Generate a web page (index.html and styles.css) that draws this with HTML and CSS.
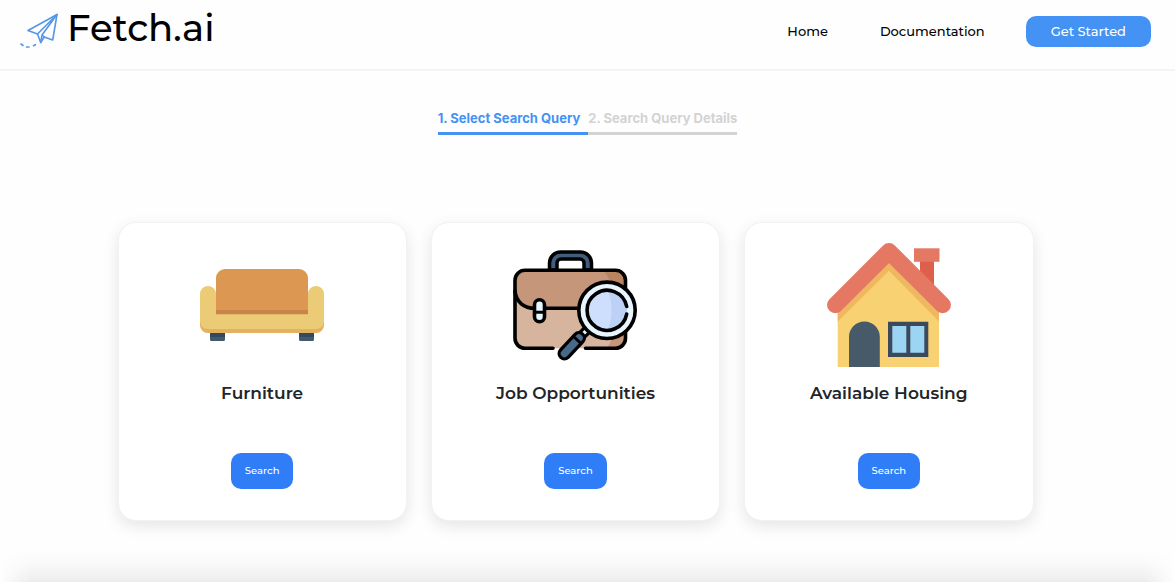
FILE: index.html
```html
<!DOCTYPE html>
<html lang="en">
<head>
    <meta charset="UTF-8">
    <meta name="viewport" content="width=device-width, initial-scale=1.0">
    <title>Fetch.ai</title>
    <link rel="stylesheet" href="styles.css">
</head>
<body>
    <header class="navbar">
        <a class="logo" href="#">
            <svg class="logo-icon" viewBox="0 0 39 36" fill="none" stroke="#5596e6" stroke-width="1.6" stroke-linejoin="round" stroke-linecap="round" aria-hidden="true">
                <path d="M37 1.5 8 17.5l9.500 3.500 3.200 8.500 3.500-5.500 8.500 3z"/>
                <path d="M37 1.500 17.500 21M37 1.500 22 22l-1.300 7.500M37 1.500 22 22l2.500 2"/>
                <path d="M1 31l2 1.500M6.500 34h2.500M13.500 32.700l2-1"/>
            </svg>
            <span>Fetch.ai</span>
        </a>
        <nav class="nav-links">
            <a href="#">Home</a>
            <a href="#">Documentation</a>
            <button class="get-started" type="button">Get Started</button>
        </nav>
    </header>

    <main>
        <ol class="steps">
            <li class="step active">1. Select Search Query</li>
            <li class="step">2. Search Query Details</li>
        </ol>

        <section class="cards">
            <article class="card">
                <svg class="card-icon" viewBox="0 0 124 124" aria-hidden="true">
                    <path fill="#334a5e" d="M10 88h15v8a2 2 0 0 1-2 2H12a2 2 0 0 1-2-2zM99 88h15v8a2 2 0 0 1-2 2h-11a2 2 0 0 1-2-2z"/>
                    <path fill="#415a70" d="M10 94h15v2a2 2 0 0 1-2 2H12a2 2 0 0 1-2-2zM99 94h15v2a2 2 0 0 1-2 2h-11a2 2 0 0 1-2-2z"/>
                    <path fill="#e3b160" d="M0 76h124v6a8 8 0 0 1-8 8H8a8 8 0 0 1-8-8z"/>
                    <path fill="#ebcb75" d="M0 51a8 8 0 0 1 16 0v14h92V51a8 8 0 0 1 16 0v27a8 8 0 0 1-8 8H8a8 8 0 0 1-8-8z"/>
                    <path fill="#dc9852" d="M16 35a9 9 0 0 1 9-9h74a9 9 0 0 1 9 9v36H16z"/>
                    <path fill="#ca8348" d="M16 67h92v4.300H16z"/>
                </svg>
                <h2>Furniture</h2>
                <button class="search" type="button">Search</button>
            </article>

            <article class="card">
                <svg class="card-icon" viewBox="0 0 124 124" stroke-linecap="round" stroke-linejoin="round" aria-hidden="true">
                    <!-- handle -->
                    <path d="M36.500 27V20a11 11 0 0 1 11-11h20a11 11 0 0 1 11 11v7H71v-7a4 4 0 0 0-4-4H48a4 4 0 0 0-4 4v7z" fill="#3f5d7d" stroke="#000" stroke-width="3.500"/>
                    <!-- case -->
                    <rect x="2" y="27.300" width="110.500" height="78" rx="10" fill="#d6b49e"/>
                    <path d="M94 105.300c8-12 10-30 8-45h10.500v35a10 10 0 0 1-10 10z" fill="#c59679"/>
                    <path d="M2 50V37a10 10 0 0 1 10-10h90a10 10 0 0 1 10 10v28H20C10 65 2 58 2 50z" fill="#c59679"/>
                    <path d="M90 27h12a10 10 0 0 1 10.500 10v28H99c3-14 0-28-9-38z" fill="#b98460"/>
                    <path d="M40 105.300H12a10 10 0 0 1-10-10V37.300a10 10 0 0 1 10-10h90.500a10 10 0 0 1 10 10v58a10 10 0 0 1-10 10H72.500" fill="none" stroke="#000" stroke-width="3.600"/>
                    <path d="M2 48c1 11 9 17.300 20 17.300h44" fill="none" stroke="#000" stroke-width="3.600"/>
                    <rect x="21.500" y="56.700" width="10" height="22" rx="5" fill="#e9f5fe" stroke="#000" stroke-width="3.600"/>
                    <path d="M22 69.300h9" stroke="#000" stroke-width="3"/>
                    <!-- magnifier -->
                    <path d="M76 85l-8 8" stroke="#000" stroke-width="10"/>
                    <path d="M75 86l-6 6" stroke="#e9f5fe" stroke-width="3.500"/>
                    <path d="M66 95l-14.500 15.500" stroke="#000" stroke-width="14"/>
                    <path d="M66 95l-14.500 15.500" stroke="#47698a" stroke-width="7.500"/>
                    <path d="M60.500 93.500l7.500 7" stroke="#000" stroke-width="3"/>
                    <circle cx="94" cy="67.300" r="28.200" fill="#e9f5fe" stroke="#000" stroke-width="3.600"/>
                    <circle cx="94" cy="67.300" r="20" fill="#bdd1f6"/>
                    <path d="M94 47.300a20 20 0 0 0 0 40c6-8 6-32 0-40z" fill="#cddffd"/>
                    <path d="M113.700 63.500a20 20 0 1 0 0 7.600" fill="none" stroke="#000" stroke-width="3.600"/>
                </svg>
                <h2>Job Opportunities</h2>
                <button class="search" type="button">Search</button>
            </article>

            <article class="card">
                <svg class="card-icon" viewBox="0 0 124 124" aria-hidden="true">
                    <path fill="#de604c" d="M93 16h14v28L93 30z"/>
                    <path fill="#e47863" d="M87 5.300h25.500v13.500H87z"/>
                    <path fill="#f7d172" d="M10.700 62 62 12l50 50v62H10.700z"/>
                    <path fill="#efb760" d="M10.700 62 62 12l50 50v16.500L62 27.700 10.700 78.500z"/>
                    <path fill="none" stroke="#e47863" stroke-width="16.500" stroke-linecap="round" stroke-linejoin="round" d="M8.300 62 62 8.300 115.700 62"/>
                    <path fill="#475a69" d="M22 124V94a15.400 15.400 0 0 1 30.800 0v30z"/>
                    <path fill="#3b495b" d="M61 78.700h40.300V114H61z"/>
                    <path fill="#9cd5f3" d="M65.300 83h14v26.700h-14zM83.300 83h14v26.700h-14z"/>
                </svg>
                <h2>Available Housing</h2>
                <button class="search" type="button">Search</button>
            </article>
        </section>
    </main>

    <footer class="footer"></footer>
</body>
</html>
```
FILE: styles.css
```css
* {
    box-sizing: border-box;
}

body {
    display: flex;
    flex-direction: column;
    min-height: 100vh;
    margin: 0;
    font-family: 'Montserrat', 'Inter', sans-serif;
    background-color: #fefefe;
    color: #212529;
}

a {
    color: #000;
    text-decoration: none;
}

button {
    border: none;
    border-radius: 10px;
    color: white;
    font-family: inherit;
    font-weight: 500;
    cursor: pointer;
}

.navbar {
    display: flex;
    justify-content: space-between;
    align-items: flex-start;
    padding: 0 24px 17px 20px;
    border-bottom: 2px solid #f4f4f4;
}

.logo {
    display: flex;
    align-items: center;
    gap: 8px;
    padding-top: 4px;
    font-size: 37px;
    font-weight: 500;
    line-height: 48px;
}

.logo-icon {
    width: 39px;
    height: 36px;
    margin-top: 5px;
}

.nav-links {
    display: flex;
    align-items: center;
    padding-top: 16px;
    font-size: 13px;
    font-weight: 500;
}

.nav-links a {
    margin-right: 52px;
    padding-bottom: 2px;
}

.nav-links a + a {
    margin-right: 41px;
}

.get-started {
    height: 31px;
    padding: 0 25px 2px;
    background-color: #4492f4;
    font-size: 13px;
}

.get-started:hover,
.search:hover {
    opacity: 0.9;
}

.steps {
    display: flex;
    justify-content: center;
    margin: 38px 0 0;
    padding: 0;
    list-style: none;
    font-family: 'Inter', sans-serif;
    font-size: 13px;
    font-weight: 700;
    line-height: 18px;
}

.step {
    padding-bottom: 5px;
    border-bottom: 3px solid #d3d3d3;
    color: #d3d3d3;
}

.step.active {
    padding-right: 8px;
    border-color: #4492f4;
    color: #4492f4;
}

.cards {
    display: grid;
    grid-template-columns: repeat(3, 1fr);
    gap: 24px;
    width: 80%;
    margin: 87px auto 0;
    padding-right: 24px;
}

.card {
    display: flex;
    flex-direction: column;
    align-items: center;
    padding: 20px 16px 31px;
    border: 1px solid #f2f2f2;
    border-radius: 18px;
    background-color: white;
    box-shadow: 0 5px 16px rgba(0, 0, 0, 0.1);
}

.card-icon {
    width: 124px;
    height: 124px;
}

.card h2 {
    margin: 14px 0 48px;
    font-size: 17px;
    font-weight: 600;
    line-height: 24px;
}

.search {
    height: 36px;
    padding: 0 14px 1px;
    background-color: #307df8;
    font-size: 10px;
}

/* soft shade along the bottom, fading out at both ends */
.footer {
    height: 32px;
    margin-top: auto;
    background: linear-gradient(to bottom, transparent, rgba(0, 0, 0, 0.02) 45%, rgba(0, 0, 0, 0.07));
    mask-image: linear-gradient(to right, transparent, #000 32px, #000 calc(100% - 32px), transparent);
}

@media (max-width: 768px) {
    .cards {
        grid-template-columns: 1fr;
        padding-right: 0;
    }
}
```
